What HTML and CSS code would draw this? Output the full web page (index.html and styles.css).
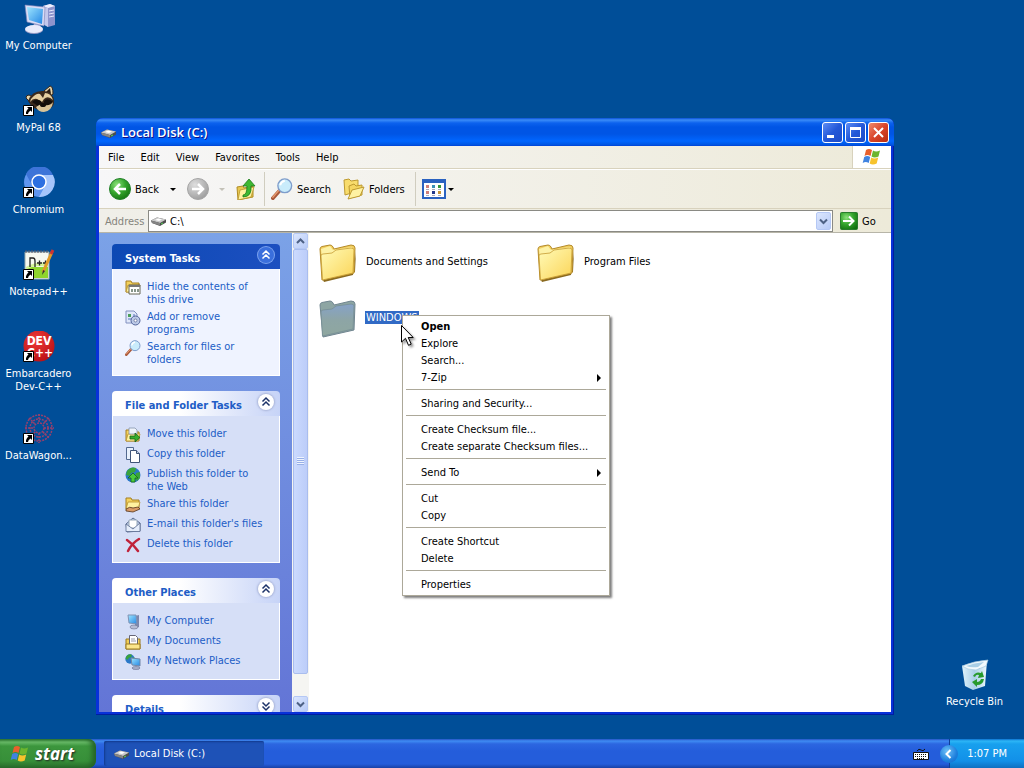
FILE: index.html
```html
<!DOCTYPE html>
<html lang="en">
<head>
    <meta charset="UTF-8">
    <meta name="viewport" content="width=device-width, initial-scale=1.0">
    <title>Local Disk (C:)</title>
    <link rel="stylesheet" href="styles.css">
</head>
<body>
    <!-- Shared icons -->
    <svg class="defs" aria-hidden="true">
        <defs>
            <linearGradient id="gScreen" x1="0" y1="0" x2="1" y2="1"><stop offset="0" stop-color="#9fe6ff"/><stop offset="1" stop-color="#2386e4"/></linearGradient>
            <linearGradient id="gFolder" x1="0" y1="0" x2="1" y2="1"><stop offset="0" stop-color="#fffbb8"/><stop offset="1" stop-color="#fbd457"/></linearGradient>
            <linearGradient id="gGrey" x1="0" y1="0" x2="0" y2="1"><stop offset="0" stop-color="#86a2c8"/><stop offset=".5" stop-color="#8da5a6"/><stop offset="1" stop-color="#8fa79f"/></linearGradient>
            <radialGradient id="gGreen" cx=".35" cy=".3" r=".8"><stop offset="0" stop-color="#8ce27a"/><stop offset=".5" stop-color="#35a52d"/><stop offset="1" stop-color="#11700f"/></radialGradient>
            <radialGradient id="gSilver" cx=".35" cy=".3" r=".8"><stop offset="0" stop-color="#dedede"/><stop offset="1" stop-color="#999"/></radialGradient>
            <radialGradient id="gRed" cx=".4" cy=".3" r=".8"><stop offset="0" stop-color="#ee3a38"/><stop offset="1" stop-color="#b60d12"/></radialGradient>
            <linearGradient id="gBin" x1="0" y1="0" x2="1" y2="0"><stop offset="0" stop-color="#dff2fb"/><stop offset=".5" stop-color="#a9cfe8"/><stop offset="1" stop-color="#eef8fc"/></linearGradient>
        </defs>
        <symbol id="disk" viewBox="0 0 16 16">
            <path d="M0 7.500 6 4.500 15 6.500v3L9 13 1 10z" fill="#4d4d4d"/>
            <path d="M0 7.500 6 4.500 15 6.500 9 10z" fill="#c9c9c9"/>
            <path d="M4 7l3-1.500 4 1-3 1.500z" fill="#fff"/>
            <path d="M0 7.500l9 2.500v2.500L1 10z" fill="#858585"/>
            <path d="M10 11l2-1" stroke="#5d5"/>
        </symbol>
        <symbol id="flag" viewBox="0 0 20 20">
            <path d="M4 3q3-2 6 0L8.500 9q-3-2-6 0z" fill="#e8602c"/>
            <path d="M11 3.500q3 2 7 0L16.500 9.500q-4 2-7 0z" fill="#6cb52e"/>
            <path d="M2.200 10q3-2 6 0L6.700 16q-3-2-6 0z" fill="#3f83e0"/>
            <path d="M9.200 10.500q3 2 7 0L14.700 16.500q-4 2-7 0z" fill="#f7c32c"/>
        </symbol>
        <symbol id="computer" viewBox="0 0 32 32">
            <path d="M20 3 27 1l5 2v19l-7 2-5-3z" fill="#8d93cc"/>
            <path d="M20 3 27 1l5 2-7 2z" fill="#eef0ff"/>
            <path d="M20 3l5 2v19l-5-3z" fill="#c3c8ec"/>
            <path d="M26 8l5-1M26 11l5-1M26 14l5-1" stroke="#e6e8fb"/>
            <path d="M11 20l6 1 1 5-8-1z" fill="#aab0da"/>
            <ellipse cx="11" cy="27" rx="9" ry="4" fill="#9298c4"/>
            <ellipse cx="11" cy="26" rx="9" ry="4" fill="#e9ebfb"/>
            <path d="M2 2 22 4l-1 19L4 19z" fill="#d9dcf5" stroke="#7a80b5" stroke-width=".6"/>
            <path d="M4 4l16 2-1 15L6 17z" fill="url(#gScreen)"/>
        </symbol>
        <symbol id="folder" viewBox="0 0 38 38">
            <path d="M4 36 36 28l1-21-3 24L5 38z" fill="#8a6a20"/>
            <path d="M1 5Q1 3 3 2.500L11 1q2 0 3 2l1 2 17-4q4 0 4 3L35 29 3 36z" fill="#f2cf5f" stroke="#b48a2a"/>
            <path d="M2 5 11 2l3 4 19-3 1 5L3 14z" fill="#fdf2a6"/>
            <path d="M2 12q0-2 2-2l9-1 4-3 15-2q3 0 3 2L34 29 3.500 36z" fill="url(#gFolder)" stroke="#c59b32" stroke-width=".8"/>
        </symbol>
        <symbol id="folder-sel" viewBox="0 0 38 38">
            <path d="M1 5Q1 3 3 2.500L11 1q2 0 3 2l1 2 17-4q4 0 4 3L35 30 4 37z" fill="#8da5a3" stroke="#708590"/>
            <path d="M2 12q0-2 2-2l9-1 4-3 15-2q3 0 3 2L34 29 3.500 36z" fill="url(#gGrey)" stroke="#768e96" stroke-width=".8"/>
        </symbol>
        <symbol id="small-folder" viewBox="0 0 16 16">
            <path d="M1 3h5l1 2h7v9H1z" fill="#f3d15c" stroke="#a57f20"/>
            <path d="M3 7h12l-2 7H1z" fill="#fff2a0" stroke="#b8912c" stroke-width=".8"/>
        </symbol>
        <symbol id="shortcut" viewBox="0 0 11 11">
            <path d="M.5.5h10v10H.5z" fill="#fff" stroke="#000"/>
            <path d="M4 2h5v5L7.500 5.500Q5 7 5 9L3 9q-.5-3 2.500-5.500z" fill="#000"/>
        </symbol>
        <symbol id="magnifier" viewBox="0 0 24 24">
            <path d="M2 22 10 13" stroke="#a9583a" stroke-width="4" stroke-linecap="round"/>
            <path d="M2 21 9 13" stroke="#e79b70" stroke-width="1.500" stroke-linecap="round"/>
            <circle cx="15" cy="8.500" r="7.500" fill="#c9ecfb" stroke="#7f9dcb" stroke-width="1.500"/>
            <path d="M10 8q1-4 5-5" stroke="#fff" stroke-width="2" fill="none"/>
        </symbol>
        <symbol id="up2" viewBox="0 0 20 20">
            <path d="M6.500 9.500 10 6l3.500 3.500M6.500 13.500 10 10l3.500 3.500" fill="none" stroke="currentColor" stroke-width="1.500"/>
        </symbol>
        <symbol id="down2" viewBox="0 0 20 20">
            <path d="M6.500 6.500 10 10l3.500-3.500M6.500 10.500 10 14l3.500-3.500" fill="none" stroke="currentColor" stroke-width="1.500"/>
        </symbol>
        <symbol id="globe" viewBox="0 0 16 16">
            <circle cx="8" cy="8" r="7.500" fill="#2a78c8"/>
            <path d="M2 4q4-5 9-3l-1 4-4 1-1 3-4-1zM11 6l4-1v6l-3 3-2-3z" fill="#3aa33c"/>
        </symbol>
    </svg>

    <main class="desktop">
        <!-- Desktop icons -->
        <nav class="icons">
            <a class="icon" href="#">
                <svg viewBox="0 0 32 32"><use href="#computer"/></svg>
                <span>My Computer</span>
            </a>
            <a class="icon" href="#">
                <svg viewBox="0 0 32 32">
                    <path d="M3 13q0-3 3-3l4 2-3 5zM21 6 27 1q3 0 3 8l-4 3z" fill="#e6d6ad" stroke="#33251a"/>
                    <path d="M23 7l4-4 1 6z" fill="#2b1d12"/>
                    <path d="M5 16Q9 5 21 6q10 1 10 11 0 6-8 8-12 2-18-9z" fill="#3b2a1c"/>
                    <path d="M8 14q5-6 9-5l3 4 2-5q6 0 8 7-5-5-9-1l-2 3-5-3q-4-1-7 3z" fill="#e6d0a1"/>
                    <path d="M9 17q4-4 9-1l1 3-4 2zM21 16q4-4 9 1l-6 4-3-2z" fill="#15100c"/>
                    <path d="M13 22q5-4 9-2 5 1 8-3-1 9-9 10-6 0-8-5z" fill="#d9c397"/>
                    <ellipse cx="20" cy="20" rx="3" ry="2" fill="#120d0a"/>
                    <use href="#shortcut" x="0" y="20" width="11" height="11"/>
                </svg>
                <span>MyPal 68</span>
            </a>
            <a class="icon" href="#">
                <svg viewBox="0 0 32 32">
                    <circle cx="16" cy="15" r="15" fill="#5f95ef"/>
                    <path d="M16 8h14A15 15 0 0 0 3 7l6 11z" fill="#3d74d8"/>
                    <path d="M16 8h14a15 15 0 0 1-14 22l6-11z" fill="#a6c5fb"/>
                    <circle cx="16" cy="15" r="7" fill="#2d6fe0" stroke="#fff" stroke-width="1.500"/>
                    <use href="#shortcut" x="0" y="20" width="11" height="11"/>
                </svg>
                <span>Chromium</span>
            </a>
            <a class="icon" href="#">
                <svg viewBox="0 0 32 32">
                    <path d="M2 3h24v27H2z" fill="#f6f8f0" stroke="#9aa"/>
                    <path d="M3 18h22v11H3z" fill="#8fd42c"/>
                    <path d="M3 21q8-6 22-3v-4q-12-2-22 4z" fill="#d5f29b"/>
                    <path d="M3 1v3M6 1v3M9 1v3M12 1v3M15 1v3M18 1v3M21 1v3M24 1v3" stroke="#556"/>
                    <path d="M7 18V9h3q2 0 2 3v6M14 14h5M16.500 11.500v5M20 14h5M22.500 11.500v5" stroke="#222" stroke-width="1.300" fill="none"/>
                    <path d="M29 3 20 23" stroke="#e29a26" stroke-width="3"/>
                    <path d="M30 1 28 5" stroke="#c33" stroke-width="3"/>
                    <path d="M20 21l-1 5 3-4z" fill="#333"/>
                    <use href="#shortcut" x="0" y="20" width="11" height="11"/>
                </svg>
                <span>Notepad++</span>
            </a>
            <a class="icon" href="#">
                <svg viewBox="0 0 32 32">
                    <circle cx="16" cy="15" r="15.500" fill="url(#gRed)"/>
                    <text class="dev" x="16" y="14">DEV</text>
                    <text class="dev" x="17" y="26">C++</text>
                    <use href="#shortcut" x="0" y="20" width="11" height="11"/>
                </svg>
                <span>Embarcadero Dev-C++</span>
            </a>
            <a class="icon" href="#">
                <svg viewBox="0 0 32 32">
                    <g fill="none" stroke="#98406c" stroke-width="1.500" stroke-dasharray="2 1">
                        <circle cx="16" cy="15" r="5"/><circle cx="16" cy="15" r="9"/><circle cx="16" cy="15" r="13"/>
                        <path d="M16 1v9M16 20v10M2 15h9M21 15h10M6 5l6 6M20 19l6 6M26 5l-6 6M12 19l-6 6"/>
                    </g>
                    <use href="#shortcut" x="0" y="20" width="11" height="11"/>
                </svg>
                <span>DataWagon...</span>
            </a>
        </nav>

        <a class="icon recycle" href="#">
            <svg viewBox="0 0 32 32">
                <path d="M3 7 20 10l8-8-2 25-12 4-8-4z" fill="url(#gBin)"/>
                <path d="M3 7Q15 2 29 1l-2 6-10 4Q8 11 3 7z" fill="#f3fafd" stroke="#a5c8de" stroke-width=".7"/>
                <path d="M7 7q8-3 18-4l-6 5q-7 1-12-1z" fill="#a9cfe6"/>
                <path d="M14 17q3-5 8-3l1-2 2 6-6 1 1-3q-3-1-4 2zM25 20q-1 6-7 6v2l-5-5 5-3v3q3 0 4-3z" fill="#279a2c"/>
            </svg>
            <span>Recycle Bin</span>
        </a>

        <!-- Explorer window -->
        <section class="window">
            <header class="titlebar">
                <svg class="i16" viewBox="0 0 16 16"><use href="#disk"/></svg>
                <h1>Local Disk (C:)</h1>
                <div class="controls">
                    <button class="ctl" aria-label="Minimize"><svg viewBox="0 0 19 19"><path d="M4 12h7v3H4z" fill="#fff"/></svg></button>
                    <button class="ctl" aria-label="Maximize"><svg viewBox="0 0 19 19"><path d="M4.500 5.500h10v9h-10zM4 5.500h11" fill="none" stroke="#fff"/><path d="M4 4h11v3H4z" fill="#fff"/></svg></button>
                    <button class="ctl close" aria-label="Close"><svg viewBox="0 0 19 19"><path d="M5 5l9 9M14 5l-9 9" stroke="#fff" stroke-width="2"/></svg></button>
                </div>
            </header>

            <div class="client">
                <div class="menubar">
                    <button>File</button>
                    <button>Edit</button>
                    <button>View</button>
                    <button>Favorites</button>
                    <button>Tools</button>
                    <button>Help</button>
                    <div class="brand"><svg viewBox="0 0 20 20"><use href="#flag"/></svg></div>
                </div>

                <div class="toolbar">
                    <div class="group">
                        <button class="tool">
                            <svg class="i22" viewBox="0 0 22 22"><circle cx="11" cy="11" r="10.500" fill="url(#gGreen)" stroke="#23802a"/><path d="M17 11H7M11 6l-5 5 5 5" fill="none" stroke="#fff" stroke-width="2.500"/></svg>
                            Back
                        </button>
                        <button class="drop" aria-label="Back history"></button>
                        <button class="tool" aria-label="Forward">
                            <svg class="i22" viewBox="0 0 22 22"><circle cx="11" cy="11" r="10.500" fill="url(#gSilver)" stroke="#a5a5a5"/><path d="M5 11h10M11 6l5 5-5 5" fill="none" stroke="#fff" stroke-width="2.500"/></svg>
                        </button>
                        <button class="drop off" aria-label="Forward history"></button>
                        <button class="tool" aria-label="Up">
                            <svg class="i22" viewBox="0 0 22 22"><path d="M2 9l6-1 1 2 9-2v11L3 22z" fill="#e8c850" stroke="#b08c24"/><path d="M5 12l14-3-3 10-13 3z" fill="#fff3a0" stroke="#b9962c" stroke-width=".8"/><path d="M8 17q4 0 4-9H8l6-7 6 7h-4q1 11-8 11z" fill="#3fb832" stroke="#1c7a1a" stroke-width=".8"/></svg>
                        </button>
                    </div>
                    <div class="group">
                        <button class="tool"><svg class="i22" viewBox="0 0 24 24"><use href="#magnifier"/></svg>Search</button>
                        <button class="tool">
                            <svg class="i22" viewBox="0 0 22 22"><path d="M1 2l5-1 2 2 7-1v11L2 17z" fill="#f8dc6c" stroke="#bd9a30"/><path d="M6 8l5-2 2 2 6-1v10L7 20z" fill="#f5d660" stroke="#bd9a30"/><path d="M9 12l12-3-4 9-12 3z" fill="#fff2a2" stroke="#bd9a30"/></svg>
                            Folders
                        </button>
                    </div>
                    <div class="group">
                        <button class="views" aria-label="Views">
                            <svg viewBox="0 0 24 20"><path d="M1 1h22v18H1z" fill="#fff" stroke="#2a62c0" stroke-width="2"/><path d="M0 0h24v4H0z" fill="#2a62c0"/>
                                <path d="M4 6h3v3H4zM4 12h3v3H4z" fill="#d0807a"/><path d="M10 6h3v3h-3z" fill="#3a8fb5"/><path d="M16 6h3v3h-3z" fill="#35963c"/><path d="M10 12h3v3h-3z" fill="#23398c"/><path d="M16 12h3v3h-3z" fill="#c4943a"/>
                                <path d="M4 10.500h3M10 10.500h3M16 10.500h3M4 16.500h3M10 16.500h3M16 16.500h3" stroke="#aab"/></svg>
                        </button>
                        <button class="drop near" aria-label="Choose view"></button>
                    </div>
                </div>

                <div class="addressbar">
                    <label for="path">Address</label>
                    <div class="combo">
                        <svg class="i16" viewBox="0 0 16 16"><use href="#disk"/></svg>
                        <input id="path" type="text" value="C:\">
                        <button class="bluebtn" aria-label="Show addresses"><svg viewBox="0 0 9 9"><path d="M1 2.500 4.500 6 8 2.500" fill="none" stroke="#4d6185" stroke-width="2"/></svg></button>
                    </div>
                    <button class="go">
                        <svg viewBox="0 0 18 18"><rect x=".5" y=".5" width="17" height="17" rx="1" fill="url(#gGreen)" stroke="#2a7d2d"/><path d="M3 9h10M9 4.500 13.500 9 9 13.500" fill="none" stroke="#fff" stroke-width="2"/></svg>
                        Go
                    </button>
                </div>

                <div class="content">
                    <aside class="sidebar">
                        <section class="panel primary">
                            <h2>System Tasks <button aria-label="Collapse"><svg viewBox="0 0 20 20"><use href="#up2"/></svg></button></h2>
                            <ul>
                                <li><svg class="i16" viewBox="0 0 16 16"><use href="#small-folder" y="-2"/><path d="M4 5h11v9H4z" fill="#fff" stroke="#665"/><path d="M4 5h11v2H4z" fill="#777"/><path d="M6 9h2v3H6zM9 9h2v3H9zM12 9h2v3h-2z" fill="#87958a"/></svg><a href="#">Hide the contents of this drive</a></li>
                                <li><svg class="i16" viewBox="0 0 16 16"><path d="M1 1h8l3 3v9H1z" fill="#dfe7fa" stroke="#8190bf"/><path d="M3 4h3v3H3z" fill="#4a9f5b"/><path d="M3 9h4M8 5h2" stroke="#5577c0"/><circle cx="10.500" cy="10.500" r="4.500" fill="#bccae8" stroke="#53649a"/><circle cx="10.500" cy="10.500" r="1.500" fill="#fff" stroke="#7782a8"/></svg><a href="#">Add or remove programs</a></li>
                                <li><svg class="i16" viewBox="0 0 24 24"><use href="#magnifier"/></svg><a href="#">Search for files or folders</a></li>
                            </ul>
                        </section>

                        <section class="panel">
                            <h2>File and Folder Tasks <button aria-label="Collapse"><svg viewBox="0 0 20 20"><use href="#up2"/></svg></button></h2>
                            <ul>
                                <li><svg class="i16" viewBox="0 0 16 16"><use href="#small-folder"/><path d="M4 1h6l2 2v4H4z" fill="#eef3fb" stroke="#8794ad" stroke-width=".8"/><path d="M5 9h5V6l5 4.500L10 15v-3H5z" fill="#35ac2c" stroke="#165f14" stroke-width=".8"/></svg><a href="#">Move this folder</a></li>
                                <li><svg class="i16" viewBox="0 0 16 16"><path d="M1.500.5h7v12h-7z" fill="#e8f0fc" stroke="#52698f"/><path d="M5.500 3.500h6l3 3v9h-9z" fill="#fff" stroke="#3e5378"/><path d="M11.500 3.500v3h3" fill="#bcd" stroke="#3e5378"/></svg><a href="#">Copy this folder</a></li>
                                <li><svg class="i16" viewBox="0 0 16 16"><use href="#globe"/><path d="M8 6l5 5h-3v4H6v-4H3z" fill="#4ccb3d" stroke="#156714" stroke-width=".8"/></svg><a href="#">Publish this folder to the Web</a></li>
                                <li><svg class="i16" viewBox="0 0 16 16"><use href="#small-folder" y="-2"/><path d="M1 12q4-3 7-1l5-1 2 2-7 3-7-1z" fill="#d99a64" stroke="#54331b" stroke-width=".8"/></svg><a href="#">Share this folder</a></li>
                                <li><svg class="i16" viewBox="0 0 16 16"><path d="M1 7l7-6 7 5v8l-13 1z" fill="#b9c8e4" stroke="#5c6c90"/><path d="M4 3h8v8H4z" fill="#fff" stroke="#9ab"/><path d="M1 7l7 5 7-6v8.500H1z" fill="#e5edfb" stroke="#5c6c90" stroke-width=".8"/></svg><a href="#">E-mail this folder's files</a></li>
                                <li><svg class="i16" viewBox="0 0 16 16"><path d="M2 3q6 4 11 11M14 2Q7 6 3 14" fill="none" stroke="#c0223a" stroke-width="2.500" stroke-linecap="round"/></svg><a href="#">Delete this folder</a></li>
                            </ul>
                        </section>

                        <section class="panel">
                            <h2>Other Places <button aria-label="Collapse"><svg viewBox="0 0 20 20"><use href="#up2"/></svg></button></h2>
                            <ul>
                                <li><svg class="i16" viewBox="0 0 16 16"><path d="M10 2l4-1v12l-4 1z" fill="#7d86ab"/><path d="M3 1h8l1 9-8-1z" fill="url(#gScreen)" stroke="#7f93b5"/><ellipse cx="9" cy="13" rx="4" ry="2" fill="#b5bcd4" stroke="#666f90" stroke-width=".6"/></svg><a href="#">My Computer</a></li>
                                <li><svg class="i16" viewBox="0 0 16 16"><path d="M1 5h14v10H1z" fill="#f0cd56" stroke="#9c7a20"/><path d="M4.500 1.500h6l2 2v8h-8z" fill="#fff" stroke="#667"/><path d="M6 5h4M6 7h5" stroke="#99a"/><path d="M1 10h14v5H1z" fill="#fbe58a" stroke="#9c7a20"/></svg><a href="#">My Documents</a></li>
                                <li><svg class="i16" viewBox="0 0 16 16"><use href="#globe" width="10" height="10"/><path d="M6 4l9 1v7l-8-1z" fill="url(#gScreen)" stroke="#7186a8"/><ellipse cx="11" cy="14" rx="4" ry="1.500" fill="#a7afcb" stroke="#666f90" stroke-width=".6"/></svg><a href="#">My Network Places</a></li>
                            </ul>
                        </section>

                        <section class="panel">
                            <h2>Details <button aria-label="Expand"><svg viewBox="0 0 20 20"><use href="#down2"/></svg></button></h2>
                        </section>
                    </aside>

                    <div class="scrollbar">
                        <button class="bluebtn" aria-label="Scroll up"><svg viewBox="0 0 9 9"><path d="M1 6 4.500 2.500 8 6" fill="none" stroke="#4d6185" stroke-width="2"/></svg></button>
                        <div class="track"><div class="thumb"><span></span></div></div>
                        <button class="bluebtn" aria-label="Scroll down"><svg viewBox="0 0 9 9"><path d="M1 2.500 4.500 6 8 2.500" fill="none" stroke="#4d6185" stroke-width="2"/></svg></button>
                    </div>

                    <div class="files">
                        <a class="file" href="#"><svg viewBox="0 0 38 38"><use href="#folder"/></svg><span>Documents and Settings</span></a>
                        <a class="file" href="#"><svg viewBox="0 0 38 38"><use href="#folder"/></svg><span>Program Files</span></a>
                        <a class="file selected" href="#"><svg viewBox="0 0 38 38"><use href="#folder-sel"/></svg><span>WINDOWS</span></a>
                    </div>
                </div>
            </div>
        </section>

        <!-- Context menu -->
        <div class="context" role="menu">
            <button role="menuitem" class="default">Open</button>
            <button role="menuitem">Explore</button>
            <button role="menuitem">Search...</button>
            <button role="menuitem" class="sub">7-Zip</button>
            <hr>
            <button role="menuitem">Sharing and Security...</button>
            <hr>
            <button role="menuitem">Create Checksum file...</button>
            <button role="menuitem">Create separate Checksum files...</button>
            <hr>
            <button role="menuitem" class="sub">Send To</button>
            <hr>
            <button role="menuitem">Cut</button>
            <button role="menuitem">Copy</button>
            <hr>
            <button role="menuitem">Create Shortcut</button>
            <button role="menuitem">Delete</button>
            <hr>
            <button role="menuitem">Properties</button>
        </div>
        <svg class="cursor" viewBox="0 0 13 22"><path d="M.5.500v16.500l4-3.700 3 7 2.700-1.200-3-6.600h5z" fill="#fff" stroke="#000"/></svg>
    </main>

    <!-- Taskbar -->
    <footer class="taskbar">
        <button class="start"><svg viewBox="0 0 20 20"><use href="#flag"/></svg>start</button>
        <button class="task"><svg class="i16" viewBox="0 0 16 16"><use href="#disk"/></svg>Local Disk (C:)</button>
        <svg class="keyboard" viewBox="0 0 16 14"><path d="M4 4q2-3 4-1t4-1" fill="none" stroke="#111"/><path d="M.5 5.500h15v7H.5z" fill="#fff" stroke="#111"/><path d="M2 7.500h12M2 9.500h12M4 11.500h8" stroke="#111" stroke-dasharray="1 1"/></svg>
        <div class="tray">
            <button class="expand" aria-label="Show hidden icons"><svg viewBox="0 0 18 18"><path d="M10.500 5 6.500 9l4 4" fill="none" stroke="#fff" stroke-width="2"/></svg></button>
            <time>1:07 PM</time>
        </div>
    </footer>
</body>
</html>
```
FILE: styles.css
```css
/* Global Styles */
* {
    box-sizing: border-box;
}

body {
    margin: 0;
    height: 100vh;
    display: flex;
    flex-direction: column;
    overflow: hidden;
    background: #004e98;
    color: #000;
    font-family: 'DejaVu Sans Condensed', 'DejaVu Sans', sans-serif;
    font-size: 11px;
    line-height: 13px;
}

button {
    display: flex;
    align-items: center;
    margin: 0;
    padding: 0;
    border: none;
    background: none;
    color: inherit;
    font: inherit;
    white-space: nowrap;
}

a {
    color: inherit;
    text-decoration: none;
}

svg {
    display: block;
    flex: none;
}

.defs {
    position: absolute;
    width: 0;
    height: 0;
}

.i16 {
    width: 16px;
    height: 16px;
}

.i22 {
    width: 22px;
    height: 22px;
}

/* Desktop */
.desktop {
    position: relative;
    flex: 1;
    min-height: 0;
}

.icons {
    padding-top: 3px;
}

.icon {
    display: flex;
    flex-direction: column;
    align-items: center;
    gap: 4px;
    width: 77px;
    height: 82px;
    color: #fff;
    text-align: center;
}

.icon svg {
    width: 32px;
    height: 32px;
}

.dev {
    fill: #fff;
    font-family: 'DejaVu Sans Condensed', sans-serif;
    font-size: 12px;
    font-weight: bold;
    text-anchor: middle;
}

.recycle {
    position: absolute;
    right: 11px;
    bottom: -2px;
}

/* Window */
.window {
    position: absolute;
    top: 118px;
    left: 96px;
    right: 130px;
    bottom: 24px;
    display: flex;
    flex-direction: column;
    padding: 0 3px 3px;
    border-radius: 7px 7px 0 0;
    background: #0831d9;
    box-shadow: inset -1px -1px #001ea0;
}

.titlebar {
    display: flex;
    align-items: center;
    gap: 4px;
    height: 28px;
    margin: 0 -3px;
    padding: 1px 5px 0;
    border-radius: 7px 7px 0 0;
    background: linear-gradient(#0a50d8 0, #3a8cf8 2px, #0c62ee 5px, #0055e5 9px, #0055e5 16px, #0066ff 23px, #0054e0 27px, #003dd7);
    color: #fff;
}

.titlebar h1 {
    flex: 1;
    margin: 0;
    font-family: 'Open Sans', sans-serif;
    font-size: 13px;
    font-weight: 600;
    text-shadow: 1px 1px #0f1089;
}

.controls {
    display: flex;
    gap: 2px;
}

.ctl {
    width: 21px;
    height: 21px;
    border: 1px solid #fff;
    border-radius: 3px;
    background: linear-gradient(135deg, #5c8df5, #2458d8 50%, #1d4bc8);
}

.ctl.close {
    background: linear-gradient(135deg, #ee8a6c, #d9452a 50%, #b82d12);
}

.client {
    flex: 1;
    min-height: 0;
    display: flex;
    flex-direction: column;
    background: #fff;
}

/* Menu bar */
.menubar {
    display: flex;
    height: 23px;
    padding-left: 1px;
    border-bottom: 1px solid #d8d2bd;
    background: linear-gradient(90deg, #f7f7f8, #edead9);
}

.menubar button {
    padding: 0 8px;
}

.brand {
    display: flex;
    align-items: center;
    justify-content: center;
    width: 39px;
    margin-left: auto;
    border-left: 1px solid #d8d2bd;
    background: #fff;
}

.brand svg {
    width: 20px;
    height: 20px;
}

/* Toolbar */
.toolbar {
    display: flex;
    height: 40px;
    padding: 2px 0;
    border-top: 1px solid #fff;
    border-bottom: 1px solid #d8d2bd;
    background: linear-gradient(90deg, #f7f7f8, #edead9);
}

.group {
    display: flex;
    align-items: center;
    padding: 0 10px 0 6px;
    border-right: 1px solid #d0cdbf;
}

.group:first-child {
    padding: 0 7px 0 10px;
}

.group:last-child {
    border-right: none;
}

.tool {
    gap: 4px;
}

.group .tool + .tool {
    margin-left: 12px;
}

.drop {
    justify-content: center;
    width: 28px;
    height: 22px;
}

.drop::before {
    content: "";
    border: 3px solid transparent;
    border-top-color: #000;
    border-bottom: none;
}

.drop.off {
    width: 26px;
}

.drop.off::before {
    border-top-color: #c4c2b8;
}

.drop.near {
    width: 10px;
}

.views svg {
    width: 24px;
    height: 20px;
}

/* Address bar */
.addressbar {
    display: flex;
    align-items: center;
    height: 24px;
    padding: 1px 0 0 6px;
    border-bottom: 1px solid #b7b5a8;
    background: linear-gradient(90deg, #f0efe9, #edead9);
}

.addressbar label {
    width: 43px;
    color: #85847c;
}

.combo {
    flex: 1;
    display: flex;
    align-items: center;
    height: 22px;
    padding: 0 1px 0 2px;
    border: 1px solid #8a8a84;
    background: #fff;
}

.combo input {
    flex: 1;
    min-width: 0;
    padding: 0 3px;
    border: none;
    outline: none;
    background: none;
    font: inherit;
}

.bluebtn {
    justify-content: center;
    width: 15px;
    height: 18px;
    border: 1px solid #b5c8f5;
    border-radius: 2px;
    background: linear-gradient(135deg, #dbe6fe, #b8cbf7);
}

.bluebtn svg {
    width: 9px;
    height: 9px;
}

.go {
    gap: 4px;
    width: 58px;
    padding-left: 7px;
}

.go svg {
    width: 18px;
    height: 18px;
}

/* Content */
.content {
    flex: 1;
    min-height: 0;
    display: flex;
}

.sidebar {
    display: flex;
    flex-direction: column;
    gap: 15px;
    width: 193px;
    padding: 11px 12px 0 13px;
    overflow: hidden;
    background: linear-gradient(#7ba2e7, #6375d6);
}

.panel {
    flex: none;
    color: #215dc6;
}

.panel h2 {
    display: flex;
    align-items: center;
    justify-content: space-between;
    height: 25px;
    margin: 0;
    padding: 3px 3px 0 13px;
    border-radius: 4px 4px 0 0;
    background: linear-gradient(90deg, #fff 40%, #c6d3f7);
    font-size: 11px;
    font-weight: bold;
}

.panel h2 button {
    width: 16px;
    height: 16px;
    margin: -6px 3px 0 0;
    border-radius: 50%;
    background: #fff;
    box-shadow: 0 0 2px 1px #a9b4d8;
    color: #1c3268;
}

.panel h2 button svg {
    width: 20px;
    height: 20px;
    margin: -2px;
}

.panel ul {
    display: flex;
    flex-direction: column;
    gap: 4px;
    margin: 0;
    padding: 11px 14px 9px 12px;
    border: 1px solid #fff;
    border-top: none;
    background: #d6dff7;
    list-style: none;
}

.panel li {
    display: flex;
    gap: 6px;
    min-height: 16px;
}

.panel a {
    flex: 1;
}

.panel.primary h2 {
    background: linear-gradient(90deg, #0c49b4, #1c4fc0);
    color: #fff;
}

.panel.primary h2 button {
    background: #3a6fdc;
    box-shadow: 0 0 0 1px #7ba2ee;
    color: #fff;
}

.panel.primary ul {
    background: #eff3ff;
}

/* Scrollbar */
.scrollbar {
    display: flex;
    flex-direction: column;
    width: 17px;
    padding: 0 1px;
    background: #f5f5f2;
}

.scrollbar .bluebtn {
    height: 16px;
}

.track {
    flex: 1;
}

.thumb {
    display: flex;
    align-items: center;
    justify-content: center;
    height: 95%;
    border: 1px solid #a9bdee;
    border-radius: 2px;
    background: linear-gradient(90deg, #cbdafe, #bccdf9);
}

.thumb span {
    width: 7px;
    height: 8px;
    background: repeating-linear-gradient(#eef4fe 0 1px, #98b0e8 1px 2px);
}

/* Files */
.files {
    flex: 1;
    display: grid;
    grid-template-columns: repeat(auto-fill, 218px);
    grid-auto-rows: 56px;
    align-content: start;
    padding: 11px 10px;
}

.file {
    display: flex;
    align-items: flex-start;
    gap: 8px;
}

.file svg {
    width: 38px;
    height: 38px;
}

.file span {
    margin-top: 11px;
    padding: 0 1px;
}

.file.selected span {
    background: #316ac5;
    color: #fff;
}

/* Context menu */
.context {
    position: absolute;
    top: 315px;
    left: 402px;
    min-width: 208px;
    padding: 2px;
    border: 1px solid #aca899;
    background: #fff;
    box-shadow: 2px 2px 2px rgba(0, 0, 0, 0.5);
}

.context button {
    width: 100%;
    height: 17px;
    padding: 0 6px 0 16px;
}

.context .default {
    font-weight: bold;
}

.context .sub::after {
    content: "";
    margin-left: auto;
    border: 4px solid transparent;
    border-left-color: #000;
    border-right: none;
}

.context hr {
    height: 1px;
    margin: 3px 1px 5px;
    border: none;
    background: #aca899;
}

.cursor {
    position: absolute;
    top: 325px;
    left: 401px;
    width: 13px;
    height: 22px;
    filter: drop-shadow(2px 2px 1px rgba(0, 0, 0, 0.4));
}

/* Taskbar */
.taskbar {
    display: flex;
    align-items: center;
    height: 29px;
    background: linear-gradient(#2453c4 0, #3f8cf3 2px, #2c66e0 5px, #245ddb 12px, #245ddb 25px, #1941a5);
    color: #fff;
}

.start {
    gap: 5px;
    width: 96px;
    height: 29px;
    margin-right: 8px;
    padding: 0 0 0 10px;
    border-radius: 0 8px 8px 0;
    background: linear-gradient(#2f7d33 0, #6cbf6b 3px, #3c963d 7px, #378f39 22px, #2a6e2c);
    box-shadow: inset -4px 0 5px #256428;
    font-family: 'Open Sans', sans-serif;
    font-size: 17px;
    font-weight: bold;
    font-style: italic;
    text-shadow: 1px 1px 2px #222;
}

.start svg {
    width: 20px;
    height: 20px;
}

.task {
    gap: 4px;
    width: 160px;
    height: 25px;
    padding-left: 10px;
    border-radius: 2px;
    background: #1e52b7;
    box-shadow: inset 1px 1px 2px #123a8c;
}

.keyboard {
    width: 16px;
    height: 14px;
    margin: 0 20px 0 auto;
}

.tray {
    display: flex;
    align-items: center;
    gap: 9px;
    height: 29px;
    padding-right: 17px;
    border-left: 1px solid #0f3f96;
    background: linear-gradient(#0c6fd0 0, #2db6f6 2px, #18a0ee 5px, #1290e8 22px, #0f6fc0);
}

.expand {
    width: 18px;
    height: 18px;
    margin-left: -10px;
    border-radius: 50%;
    background: radial-gradient(circle at 40% 35%, #6fc1f8, #1d7fdd 60%, #1468c4);
}
```
